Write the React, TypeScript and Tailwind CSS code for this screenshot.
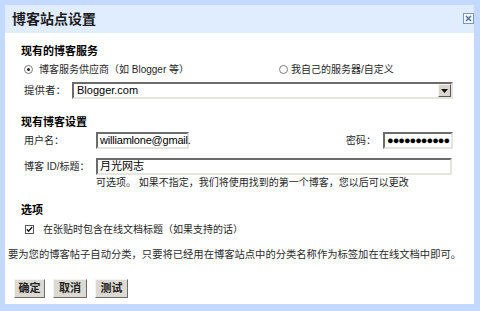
import React from 'react';

const font = "font-['Liberation_Sans','Noto_Sans_CJK_SC',sans-serif]";

// classic sunken field
const field =
    'h-[17px] bg-white border-2 border-t-[#6b6b6b] border-l-[#6b6b6b] border-b-[#e6e4df] border-r-[#e6e4df] flex items-center px-[2px] text-[11px] text-black';

const Radio = ({ checked }: { checked?: boolean }) => (
    <span className="w-[9px] h-[9px] rounded-full border border-[#7d7d7d] bg-white flex items-center justify-center shrink-0">
        {checked && <span className="w-[3px] h-[3px] rounded-full bg-[#222]" />}
    </span>
);

const Button = ({ label, width }: { label: string; width: string }) => (
    <button
        className={`${width} h-[19px] bg-[#dcd9d2] border border-t-[#f4f3f0] border-l-[#f4f3f0] border-b-[#6e6c68] border-r-[#6e6c68] text-[11px] font-semibold text-[#222] flex items-center justify-center`}
    >
        {label}
    </button>
);

const App = () => {
    return (
        <div className={`w-[480px] h-[311px] bg-[#c3d9ff] pt-[5px] pl-[5px] pr-[6px] pb-[7px] ${font}`}>
            <div className="w-full h-full bg-white flex flex-col">

                {/* Title bar */}
                <div className="h-[28px] bg-[#e0ecff] flex justify-between shrink-0">
                    <h1 className="pl-[7px] pt-[5px] text-[14px] leading-[18px] font-bold text-[#1a1a1a]">博客站点设置</h1>
                    <button className="mt-[8px] w-[11px] h-[11px] border border-[#7f96bd] bg-[#f3f7ff] flex items-center justify-center">
                        <svg width="7" height="7" viewBox="0 0 7 7">
                            <path d="M1 1L6 6M6 1L1 6" stroke="#4f6c9f" strokeWidth="1.4" />
                        </svg>
                    </button>
                </div>

                <div className="flex flex-col text-[10px] text-[#1f1f1f]">

                    {/* Existing blog service */}
                    <div className="mt-[11px] pl-[16px] h-[14px] flex items-center text-[11px] font-bold text-black">现有的博客服务</div>
                    <div className="mt-[3px] h-[16px] flex items-center">
                        <div className="pl-[19px] w-[274px] flex items-center gap-[6px]">
                            <Radio checked />
                            <span>博客服务供应商（如 Blogger 等）</span>
                        </div>
                        <div className="flex items-center gap-[3px]">
                            <Radio />
                            <span>我自己的服务器/自定义</span>
                        </div>
                    </div>
                    <div className="mt-[5px] h-[17px] flex items-center pl-[19px] pr-[21px]">
                        <span className="w-[48px] text-[10.5px]">提供者：</span>
                        <div className={`${field} flex-1 justify-between pr-0`}>
                            <span className="pl-[1px]">Blogger.com</span>
                            <span className="w-[13px] h-[13px] bg-[#d9d6cf] border border-t-[#f6f5f2] border-l-[#f6f5f2] border-b-[#5c5a56] border-r-[#5c5a56] flex items-center justify-center">
                                <svg width="7" height="4" viewBox="0 0 7 4">
                                    <path d="M0 0H7L3.5 4Z" fill="#111" />
                                </svg>
                            </span>
                        </div>
                    </div>

                    {/* Existing blog settings */}
                    <div className="mt-[16px] pl-[16px] h-[14px] flex items-center text-[11px] font-bold text-black">现有博客设置</div>
                    <div className="mt-[3px] h-[17px] flex items-center pl-[19px] pr-[21px]">
                        <span className="w-[72px]">用户名：</span>
                        <div className={`${field} w-[93px] whitespace-nowrap text-[9.5px] px-[1px] tracking-[-0.2px]`}>williamlone@gmail.</div>
                        <span className="ml-auto w-[37px]">密码：</span>
                        <div className={`${field} w-[70px] overflow-hidden tracking-[-1px] text-[8px]`}>●●●●●●●●●●●</div>
                    </div>
                    <div className="mt-[9px] h-[17px] flex items-center pl-[19px] pr-[22px]">
                        <span className="w-[72px]">博客 ID/标题：</span>
                        <div className={`${field} flex-1`}>月光网志</div>
                    </div>
                    <div className="mt-[1px] pl-[91px] h-[13px] flex items-center">
                        可选项。 如果不指定，我们将使用找到的第一个博客，您以后可以更改
                    </div>

                    {/* Options */}
                    <div className="mt-[14px] pl-[16px] h-[14px] flex items-center text-[11px] font-bold text-black">选项</div>
                    <div className="mt-[5px] pl-[20px] h-[14px] flex items-center gap-[9px]">
                        <span className="w-[9px] h-[9px] border border-[#555] bg-white flex items-center justify-center">
                            <svg width="7" height="7" viewBox="0 0 7 7">
                                <path d="M0.8 3.2L2.6 5.2L6.2 1" stroke="#111" strokeWidth="1.3" fill="none" />
                            </svg>
                        </span>
                        <span>在张贴时包含在线文档标题（如果支持的话）</span>
                    </div>

                    <div className="mt-[12px] pl-[3px] h-[13px] flex items-center text-[10.3px] text-[#2a2a2a] whitespace-nowrap">
                        要为您的博客帖子自动分类，只要将已经用在博客站点中的分类名称作为标签加在在线文档中即可。
                    </div>

                    {/* Actions */}
                    <div className="mt-[18px] pl-[9px] flex items-center gap-[8px]">
                        <Button label="确定" width="w-[31px]" />
                        <Button label="取消" width="w-[34px]" />
                        <Button label="测试" width="w-[33px]" />
                    </div>
                </div>
            </div>
        </div>
    );
};

export default App;
